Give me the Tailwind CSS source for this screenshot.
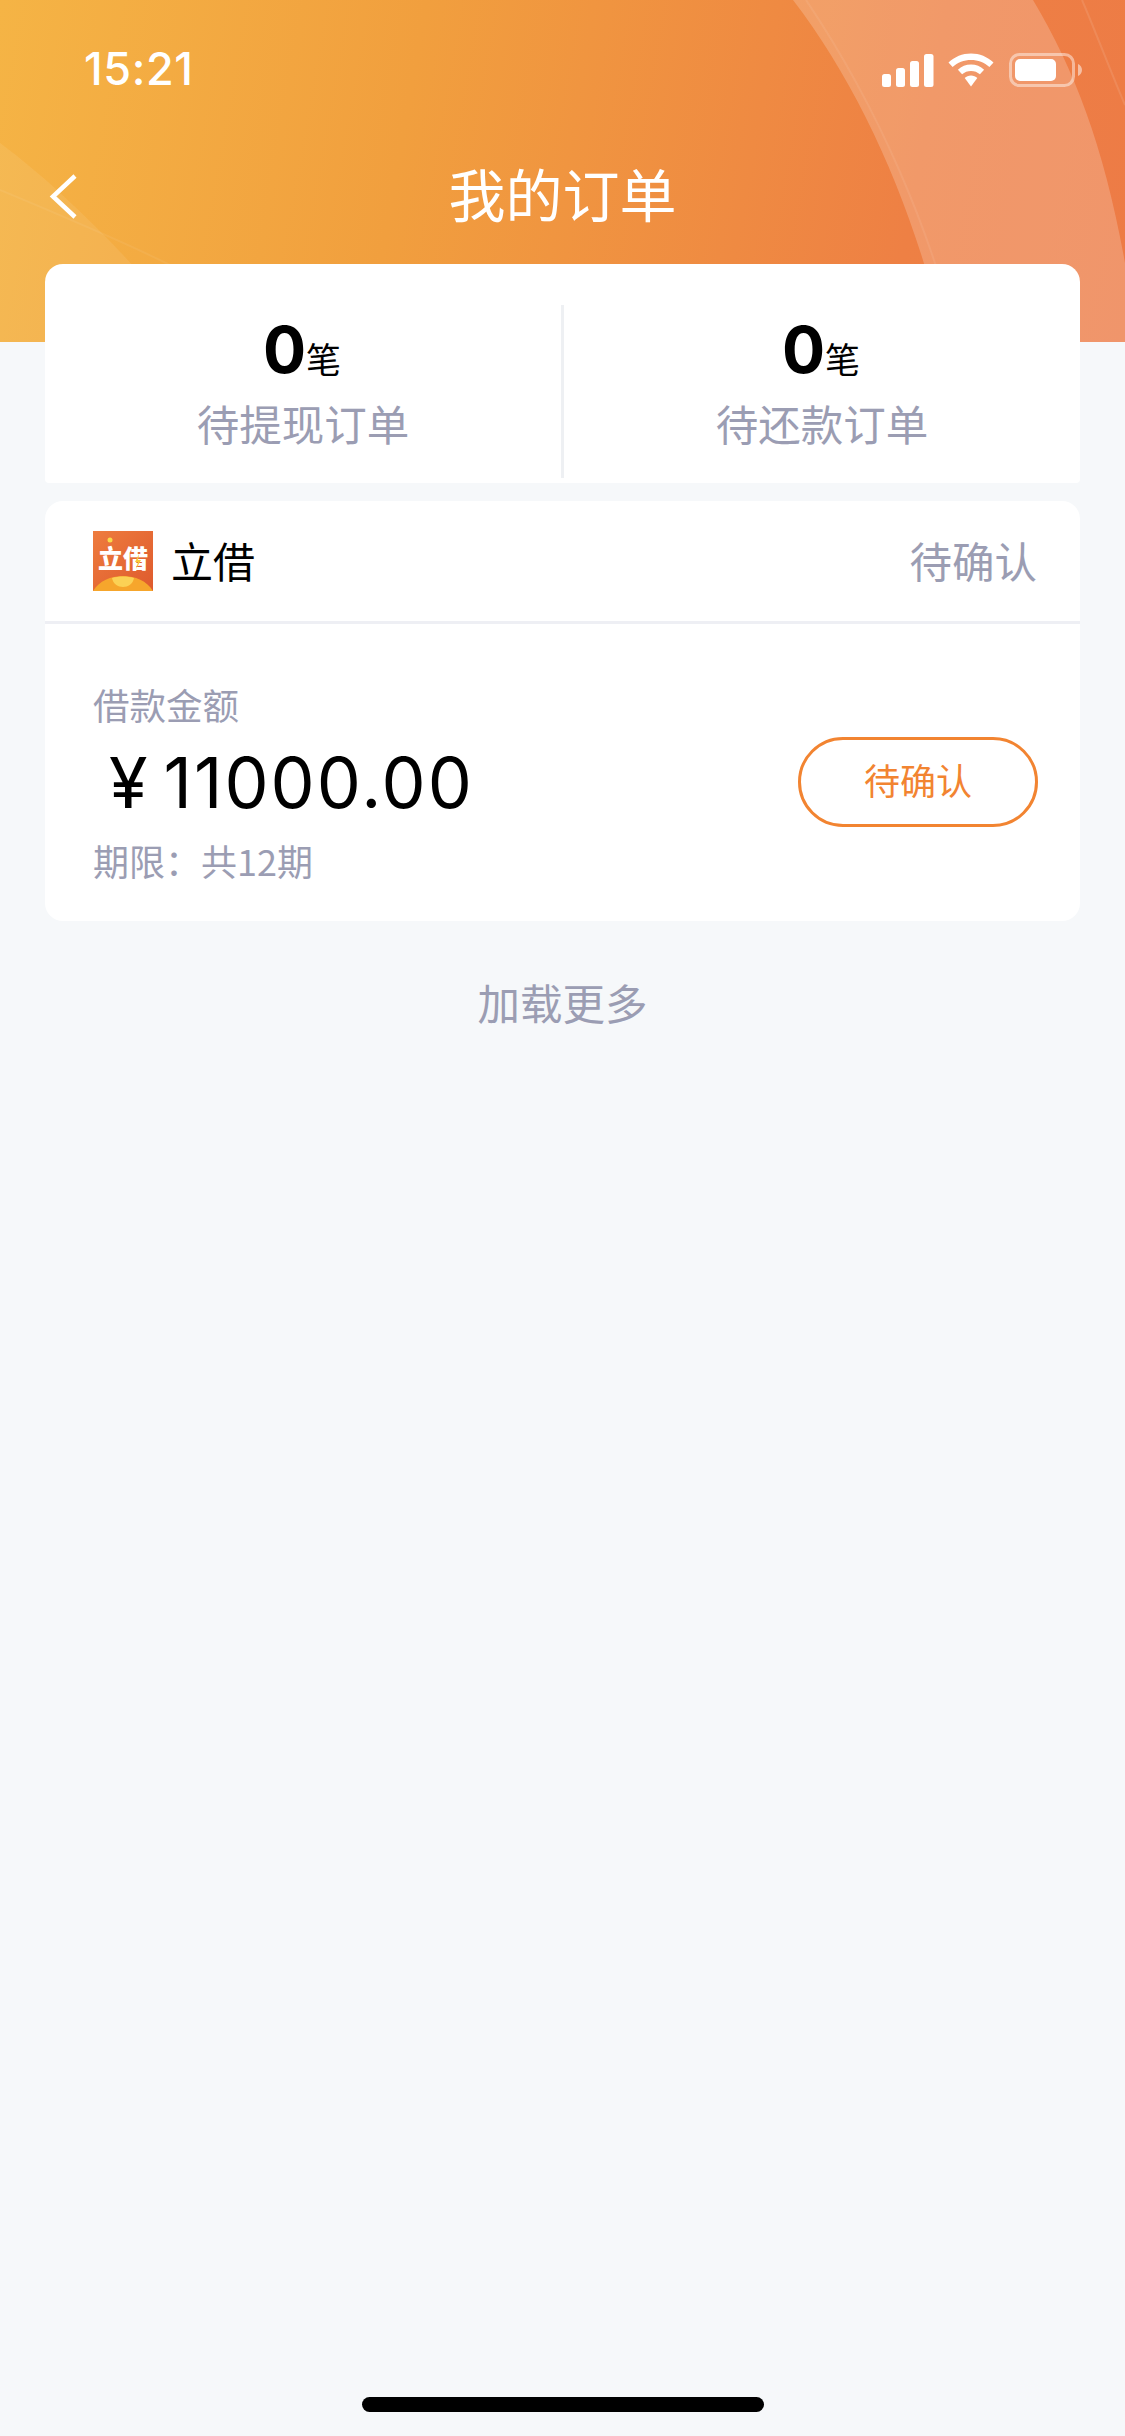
<!DOCTYPE html>
<html lang="zh">
<head>
<meta charset="utf-8">
<script src="https://cdn.jsdelivr.net/npm/@tailwindcss/browser@4"></script>
<title>我的订单</title>
</head>
<body class="m-0">
<div class="w-[1125px] h-[2436px] bg-[#f6f8fa] flex flex-col overflow-hidden font-['Noto_Sans_CJK_SC','Noto_Sans',sans-serif]">
  <header class="relative h-[342px] shrink-0 overflow-hidden bg-[linear-gradient(100deg,#f5b445_0%,#f19f3e_36%,#ee8044_80%,#ed7b46_100%)]">
    <svg class="absolute inset-0" width="1125" height="342" viewBox="0 0 1125 342" fill="none">
      <path d="M793 0C862 90 915 210 945 342H1125V263C1105 150 1075 70 1033 0Z" fill="#ffffff" fill-opacity="0.2"/>
      <path d="M0 143C70 195 140 270 200 342H0Z" fill="#ffffff" fill-opacity="0.08"/>
      <path d="M806 0C880 110 930 230 958 342" stroke="#ffffff" stroke-opacity="0.07" stroke-width="2"/>
      <path d="M1082 0C1095 30 1110 70 1125 105" stroke="#ffffff" stroke-opacity="0.1" stroke-width="2"/>
      <path d="M0 190C60 215 120 240 170 265" stroke="#ffffff" stroke-opacity="0.06" stroke-width="2"/>
    </svg>
    <div class="relative h-[138px] flex items-start justify-between pt-[52px]">
      <span class="ml-[84px] text-[45px] leading-[34px] tracking-[0.6px] font-medium text-white font-['Inter',sans-serif]">15:21</span>
      <svg class="mr-[43px]" width="201" height="36" viewBox="881 51 201 36" fill="none">
        <rect x="882" y="73" width="9" height="13" rx="2.5" fill="#fff"/>
        <rect x="896" y="67" width="9" height="19" rx="2.5" fill="#fff"/>
        <rect x="910" y="60" width="9" height="26" rx="2.5" fill="#fff"/>
        <rect x="924" y="53" width="9.5" height="33" rx="2.5" fill="#fff"/>
        <path d="M971 52.5C979.5 52.5 987.5 55.8 993.5 61.5L989.4 66C984.5 61.6 978 59 971 59C964 59 957.5 61.6 952.6 66L948.5 61.5C954.5 55.8 962.500 52.500 971 52.500Z" fill="#fff"/>
        <path d="M971 63.500C976 63.500 980.600 65.400 984.100 68.700L979.900 73.200C977.500 71.100 974.400 69.900 971 69.900C967.600 69.900 964.500 71.100 962.100 73.200L957.900 68.700C961.400 65.400 966 63.500 971 63.500Z" fill="#fff"/>
        <path d="M971 74.500C973.500 74.500 975.700 75.400 977.300 76.900L971 85.500L964.700 76.900C966.300 75.400 968.500 74.500 971 74.500Z" fill="#fff"/>
        <rect x="1010.500" y="53.500" width="63" height="31" rx="9" stroke="#fff" stroke-opacity="0.45" stroke-width="3"/>
        <rect x="1015" y="58" width="41" height="22" rx="5" fill="#fff"/>
        <path d="M1078 63C1080.500 64 1082 66.500 1082 69C1082 71.500 1080.500 74 1078 75Z" fill="#fff" fill-opacity="0.5"/>
      </svg>
    </div>
    <div class="relative h-[118px] flex items-center justify-center">
      <svg class="absolute left-[47px] top-[35px]" width="32" height="47" viewBox="0 0 32 47" fill="none">
        <path d="M28 3L6 23.500L28 44" stroke="#fff" stroke-width="4.500"/>
      </svg>
      <h1 class="text-[57px] leading-[60px] font-normal text-white -mt-[10px]">我的订单</h1>
    </div>
  </header>

  <main class="relative -mt-[78px] px-[45px] flex flex-col gap-[18px]">
    <section class="h-[219px] bg-white rounded-t-[18px] rounded-b-[4px] flex">
      <div class="flex-1 flex flex-col items-center pt-[50px]">
        <div class="flex items-baseline h-[72px] leading-[72px] -ml-[2px]">
          <span class="text-[64px] font-bold text-black font-['Inter',sans-serif]">0</span>
          <span class="text-[35px] text-black">笔</span>
        </div>
        <div class="text-[42.5px] leading-[74px] text-[#9b9db3]">待提现订单</div>
      </div>
      <div class="w-[3px] h-[173px] mt-[41px] bg-[#eef0f3]"></div>
      <div class="flex-1 flex flex-col items-center pt-[50px]">
        <div class="flex items-baseline h-[72px] leading-[72px] -ml-[2px]">
          <span class="text-[64px] font-bold text-black font-['Inter',sans-serif]">0</span>
          <span class="text-[35px] text-black">笔</span>
        </div>
        <div class="text-[42.5px] leading-[74px] text-[#9b9db3]">待还款订单</div>
      </div>
    </section>

    <section class="h-[420px] bg-white rounded-[18px] flex flex-col">
      <div class="h-[120px] flex items-center justify-between pl-[48px] pr-[43px]">
        <div class="flex items-center gap-[18px]">
          <div class="relative w-[60px] h-[60px] overflow-hidden bg-[linear-gradient(135deg,#ee7c3e,#de5a2d)] flex justify-center">
            <span class="mt-[10px] text-[25px] leading-[32px] font-black text-white whitespace-nowrap">立借</span>
            <svg class="absolute inset-0" width="60" height="60" viewBox="0 0 60 60">
              <circle cx="17" cy="9" r="2.500" fill="#f8d94a"/>
              <path d="M46 23L42 31H45L43 38L48 29H45Z" fill="#f8c93a"/>
              <path d="M0 60C6 50 18 45 30 45C42 45 54 50 60 60Z" fill="#f6a62c"/>
              <path d="M19 47C25 45 35 45 41 47C40 53 35 56 30 56C25 56 20 53 19 47Z" fill="#fbd155"/>
            </svg>
          </div>
          <span class="text-[42px] leading-[60px] text-black -mt-[3px]">立借</span>
        </div>
        <span class="text-[42.5px] leading-[60px] text-[#9b9db3] -mt-[3px]">待确认</span>
      </div>
      <div class="h-[3px] bg-[#eeeff4]"></div>
      <div class="flex-1 flex items-center justify-between pl-[48px] pr-[42px] pt-[39px] pb-[21px]">
        <div class="flex flex-col">
          <span class="text-[36.500px] leading-[78px] text-[#9b9db3]">借款金额</span>
          <span class="text-[70px] leading-[78px] text-black font-['Inter',sans-serif] flex items-center pl-[16px] gap-[16px]"><span>¥</span><span class="tracking-[2px]">11000.00</span></span>
          <span class="text-[36px] leading-[76px] text-[#9b9db3]">期限：<span>共12期</span></span>
        </div>
        <button class="w-[240px] h-[90px] rounded-full border-[3px] border-[#f28431] bg-white text-[36px] text-[#f28431] leading-[50px] pb-[6px]">待确认</button>
      </div>
    </section>

    <div class="mt-[33px] text-center text-[42.500px] leading-[60px] text-[#9b9db3]">加载更多</div>
  </main>

  <div class="mt-auto mb-[24px] mx-auto w-[402px] h-[15px] rounded-[9px] bg-black"></div>
</div>
</body>
</html>
